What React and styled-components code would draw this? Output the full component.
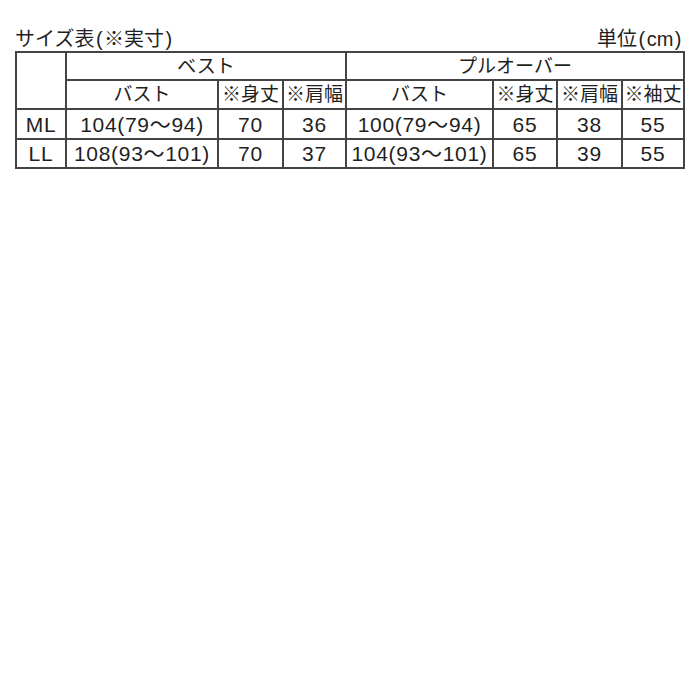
import React from 'react';
import styled, { createGlobalStyle } from 'styled-components';

const GlobalStyle = createGlobalStyle`
  html, body {
    margin: 0;
    background: #fff;
  }
  body {
    font-family: "Liberation Sans", "Noto Sans CJK JP", sans-serif;
    color: #1f1f1f;
  }
`;

const Wrapper = styled.div`
  width: 668px;
  padding: 20px 0 0 15px;
`;

const TitleBar = styled.div`
  display: flex;
  justify-content: space-between;
  align-items: flex-end;
  font-size: 20px;
  line-height: 24px;
  height: 31px;
`;

const Paren = styled.span`
  display: inline-block;
  margin: 0 1.5px;
`;

const Table = styled.table`
  width: 668px;
  border-collapse: collapse;
  table-layout: fixed;
  font-size: 19px;
`;

const Cell = styled.td`
  border: 2px solid #444;
  padding: 0;
  height: ${p => p.$h || 27}px;
  text-align: center;
  vertical-align: middle;
  line-height: 1;
  white-space: nowrap;
  font-size: ${p => p.$num ? 21 : 19}px;
  letter-spacing: ${p => p.$num ? '0.7px' : '0'};
`;

const cols = [50, 152, 65, 63, 147, 64, 65, 62];

const rows = [
  { size: 'ML', h: 28, vest: ['104(79〜94)', '70', '36'], pull: ['100(79〜94)', '65', '38', '55'] },
  { size: 'LL', h: 27, vest: ['108(93〜101)', '70', '37'], pull: ['104(93〜101)', '65', '39', '55'] },
];

function App() {
  return (
    <>
      <GlobalStyle />
      <Wrapper>
        <TitleBar>
          <span>サイズ表<Paren>(</Paren>※実寸<Paren>)</Paren></span>
          <span>単位<Paren>(</Paren>cm<Paren>)</Paren></span>
        </TitleBar>
        <Table>
          <colgroup>
            {cols.map((w, i) => <col key={i} style={{ width: w }} />)}
          </colgroup>
          <tbody>
            <tr>
              <Cell rowSpan={2} />
              <Cell colSpan={3} $h={26}>ベスト</Cell>
              <Cell colSpan={4} $h={26}>プルオーバー</Cell>
            </tr>
            <tr>
              <Cell $h={27}>バスト</Cell>
              <Cell $h={27}>※身丈</Cell>
              <Cell $h={27}>※肩幅</Cell>
              <Cell $h={27}>バスト</Cell>
              <Cell $h={27}>※身丈</Cell>
              <Cell $h={27}>※肩幅</Cell>
              <Cell $h={27}>※袖丈</Cell>
            </tr>
            {rows.map(r => (
              <tr key={r.size}>
                <Cell $h={r.h} $num>{r.size}</Cell>
                {r.vest.map((v, j) => <Cell key={'v' + j} $h={r.h} $num>{v}</Cell>)}
                {r.pull.map((v, j) => <Cell key={'p' + j} $h={r.h} $num>{v}</Cell>)}
              </tr>
            ))}
          </tbody>
        </Table>
      </Wrapper>
    </>
  );
}

export default App;
